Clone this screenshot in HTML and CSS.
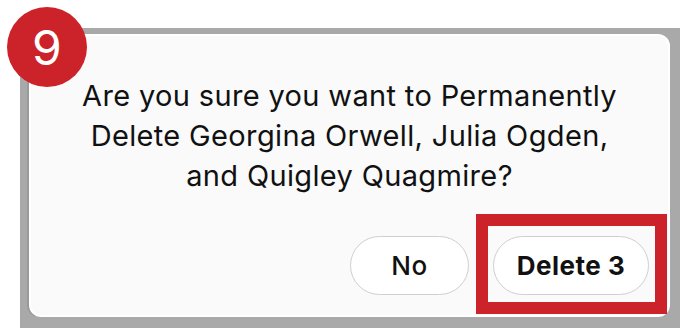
FILE: index.html
```html
<!DOCTYPE html>
<html>
<head>
<meta charset="utf-8">
<link rel="stylesheet" href="styles.css">
</head>
<body>
<div class="backdrop">
  <div class="dialog">
    <p class="message">Are you sure you want to Permanently<br>Delete Georgina Orwell, Julia Ogden,<br>and Quigley Quagmire?</p>
    <div class="actions">
      <button class="btn">No</button>
      <button class="btn btn-strong">Delete 3<span class="highlight"></span></button>
    </div>
  </div>
</div>
<div class="badge">9</div>
</body>
</html>
```
FILE: styles.css
```css
html, body {
  margin: 0;
  padding: 0;
}
body {
  width: 680px;
  height: 328px;
  background: #ffffff;
  overflow: hidden;
  position: relative;
  font-family: "Inter", "Liberation Sans", sans-serif;
  color: #111;
}
.backdrop {
  margin-left: 20px;
  margin-top: 28px;
  height: 300px;
  box-sizing: border-box;
  background: #a9a9a9;
  padding: 6px 10px 11px 9px;
}
.dialog {
  height: 100%;
  box-sizing: border-box;
  background: #fafafa;
  border: 2px solid #ffffff;
  border-radius: 12px;
  box-shadow: -2px 0 0 #9a9a9a;
  display: flex;
  flex-direction: column;
}
.message {
  margin: 0;
  padding-top: 40px;
  text-align: center;
  font-size: 29px;
  letter-spacing: 0.35px;
  line-height: 40px;
  color: #111;
}
.actions {
  margin-top: auto;
  margin-bottom: 20px;
  padding-right: 19px;
  display: flex;
  justify-content: flex-end;
  gap: 24px;
}
.btn {
  position: relative;
  height: 59px;
  border: 1.5px solid #cfcfcf;
  border-radius: 30px;
  background: #ffffff;
  font-family: inherit;
  font-size: 26px;
  letter-spacing: 0.5px;
  font-weight: 500;
  color: #111;
  padding: 0;
  width: 119px;
}
.btn-strong {
  width: 156px;
  font-weight: 700;
}
.highlight {
  position: absolute;
  top: -23px;
  left: -18px;
  right: -19px;
  bottom: -20px;
  border: 12px solid #cc2229;
}
.badge {
  position: absolute;
  left: 7px;
  top: 7px;
  width: 80px;
  height: 80px;
  border-radius: 50%;
  background: #cc2229;
  color: #fff;
  font-size: 48px;
  line-height: 82px;
  text-align: center;
}
```
